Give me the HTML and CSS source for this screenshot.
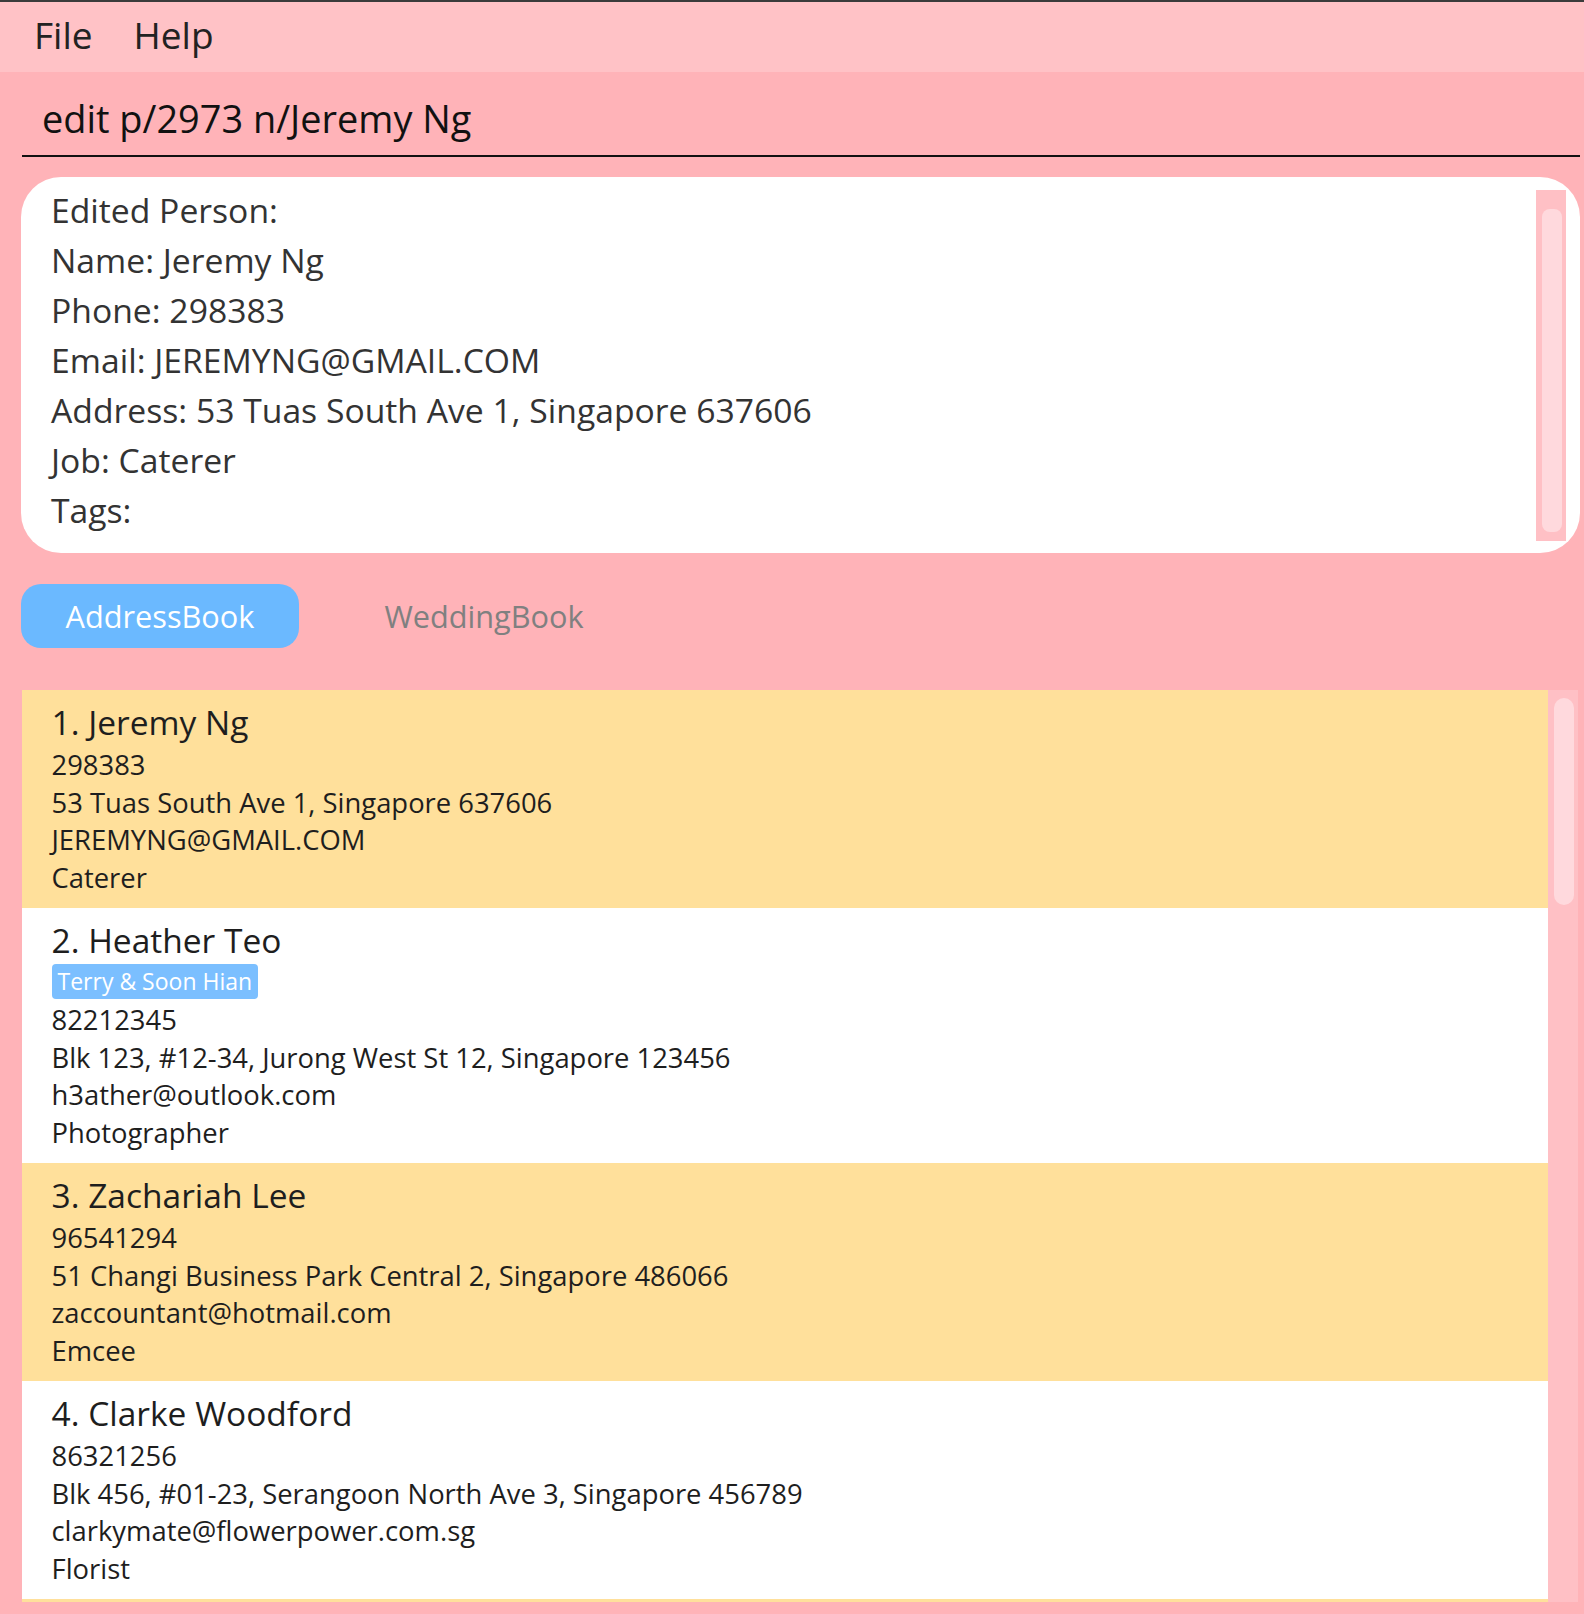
FILE: index.html
```html
<!DOCTYPE html>
<html lang="en">
<head>
<meta charset="utf-8">
<title>AddressBook</title>
<link rel="stylesheet" href="styles.css">
</head>
<body>
<div class="window">
  <nav class="menubar">
    <span class="menu-item">File</span>
    <span class="menu-item">Help</span>
  </nav>
  <div class="command">
    <div class="command-text">edit p/2973 n/Jeremy Ng</div>
  </div>
  <div class="result">
    <div class="result-text">
      <div>Edited Person:</div>
      <div>Name: Jeremy Ng</div>
      <div>Phone: 298383</div>
      <div>Email: JEREMYNG@GMAIL.COM</div>
      <div>Address: 53 Tuas South Ave 1, Singapore 637606</div>
      <div>Job: Caterer</div>
      <div>Tags:</div>
    </div>
    <div class="result-scroll"><div class="thumb"></div></div>
  </div>
  <div class="tabs">
    <div class="tab active">AddressBook</div>
    <div class="tab">WeddingBook</div>
  </div>
  <div class="list">
    <div class="cards">
      <div class="card alt">
        <div class="name">1. Jeremy Ng</div>
        <div class="detail">298383</div>
        <div class="detail">53 Tuas South Ave 1, Singapore 637606</div>
        <div class="detail">JEREMYNG@GMAIL.COM</div>
        <div class="detail">Caterer</div>
      </div>
      <div class="card">
        <div class="name">2. Heather Teo</div>
        <div class="tags"><span class="tag">Terry &amp; Soon Hian</span></div>
        <div class="detail">82212345</div>
        <div class="detail">Blk 123, #12-34, Jurong West St 12, Singapore 123456</div>
        <div class="detail">h3ather@outlook.com</div>
        <div class="detail">Photographer</div>
      </div>
      <div class="card alt">
        <div class="name">3. Zachariah Lee</div>
        <div class="detail">96541294</div>
        <div class="detail">51 Changi Business Park Central 2, Singapore 486066</div>
        <div class="detail">zaccountant@hotmail.com</div>
        <div class="detail">Emcee</div>
      </div>
      <div class="card">
        <div class="name">4. Clarke Woodford</div>
        <div class="detail">86321256</div>
        <div class="detail">Blk 456, #01-23, Serangoon North Ave 3, Singapore 456789</div>
        <div class="detail">clarkymate@flowerpower.com.sg</div>
        <div class="detail">Florist</div>
      </div>
      <div class="card alt card-empty"></div>
    </div>
    <div class="list-scroll"><div class="thumb"></div></div>
  </div>
</div>
</body>
</html>
```
FILE: styles.css
```css
* { box-sizing: border-box; }
html, body { margin: 0; padding: 0; }
body {
  width: 1584px;
  height: 1614px;
  overflow: hidden;
  background: #FFB3B8;
  font-family: "Open Sans", "Noto Sans", sans-serif;
}
.window {
  height: 1614px;
  border-top: 2px solid #3b3b3b;
  display: flex;
  flex-direction: column;
}
.menubar {
  height: 70px;
  flex: none;
  background: #FFC2C6;
  display: flex;
  gap: 41px;
  padding-left: 34px;
  font-size: 37px;
  line-height: 66px;
  color: #222;
}
.command {
  flex: none;
  margin: 0 4px 0 22px;
  padding: 22px 0 13px 20px;
  border-bottom: 2px solid #111;
}
.command-text {
  font-size: 37.9px;
  line-height: 48px;
  color: #111;
}
.result {
  flex: none;
  margin: 20px 4px 0 21px;
  height: 376px;
  background: #fff;
  border-radius: 40px;
  display: flex;
  padding: 8px 14px 12px 30px;
}
.result-text {
  flex: 1;
  font-size: 33.7px;
  line-height: 50px;
  color: #333;
}
.result-scroll {
  width: 30px;
  margin-top: 5px;
  background: #FFC0C5;
  padding: 19px 4px 9px 6px;
}
.result-scroll .thumb {
  height: 100%;
  background: #FFD9DD;
  border-radius: 8px;
}
.tabs {
  flex: none;
  margin: 31px 0 0 21px;
  display: flex;
  gap: 46px;
  height: 64px;
}
.tab {
  width: 278px;
  height: 64px;
  border-radius: 20px;
  text-align: center;
  font-size: 30.7px;
  line-height: 64px;
  color: #808080;
}
.tab.active {
  background: #6BB9FF;
  color: #fff;
}
.list {
  flex: none;
  margin: 42px 6px 0 22px;
  height: 912px;
  display: flex;
  overflow: hidden;
}
.cards {
  flex: 1;
  overflow: hidden;
}
.card {
  padding: 8px 0 12px 29.5px;
  background: #fff;
  color: #1e1e1e;
}
.card.alt { background: #FFE09B; }
.card-empty { height: 218px; }
.name {
  font-size: 33.5px;
  line-height: 48px;
}
.detail {
  font-size: 27.4px;
  line-height: 37.5px;
}
.tags {
  height: 37px;
  padding-top: 0;
}
.tag {
  display: inline-block;
  height: 35px;
  padding: 0 6px;
  border-radius: 4px;
  background: #7BBFFF;
  color: #fff;
  font-size: 23px;
  line-height: 35px;
  vertical-align: top;
}
.list-scroll {
  width: 30px;
  flex: none;
  background: #FFC0C5;
  padding: 8px 4px 0 6px;
}
.list-scroll .thumb {
  height: 207px;
  background: #FFD9DD;
  border-radius: 10px;
}
```
